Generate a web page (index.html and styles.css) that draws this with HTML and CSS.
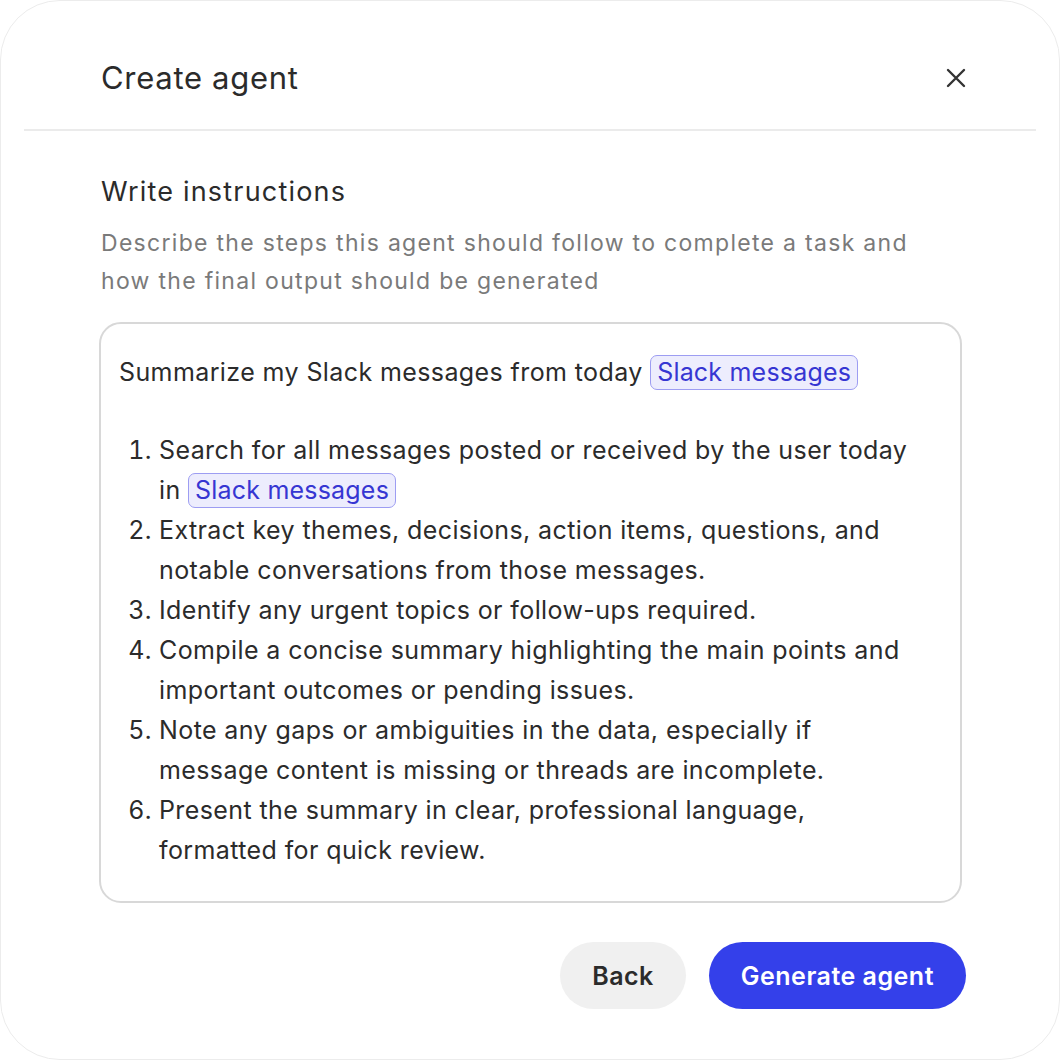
FILE: index.html
```html
<!DOCTYPE html>
<html lang="en">
<head>
  <meta charset="UTF-8" />
  <meta name="viewport" content="width=device-width, initial-scale=1.0" />
  <title>Create agent</title>
  <link rel="stylesheet" href="styles.css">
</head>
<body>
  <div class="dialog">
    <div class="dialog-header">
      <h1 class="dialog-title">Create agent</h1>
      <button class="close-btn" aria-label="Close">
        <svg width="20" height="20" viewBox="0 0 20 20" fill="none" stroke="#333" stroke-width="2.4" stroke-linecap="round">
          <path d="M2 2 L18 18 M18 2 L2 18" />
        </svg>
      </button>
    </div>
    <div class="divider"></div>

    <div class="dialog-body">
      <h2 class="section-title">Write instructions</h2>
      <p class="section-desc">Describe the steps this agent should follow to complete a task and how the final output should be generated</p>

      <div class="editor">
        <p class="editor-intro">Summarize my Slack messages from today <span class="chip">Slack messages</span></p>
        <ol class="editor-steps">
          <li>Search for all messages posted or received by the user today in <span class="chip">Slack messages</span></li>
          <li>Extract key themes, decisions, action items, questions, and notable conversations from those messages.</li>
          <li>Identify any urgent topics or follow-ups required.</li>
          <li>Compile a concise summary highlighting the main points and important outcomes or pending issues.</li>
          <li>Note any gaps or ambiguities in the data, especially if message content is missing or threads are incomplete.</li>
          <li>Present the summary in clear, professional language, formatted for quick review.</li>
        </ol>
      </div>

      <div class="actions">
        <button class="btn btn-secondary">Back</button>
        <button class="btn btn-primary">Generate agent</button>
      </div>
    </div>
  </div>
</body>
</html>
```

FILE: styles.css
```css
html, body {
  margin: 0;
  padding: 0;
  background: #fff;
  font-family: 'Inter', 'Noto Sans', sans-serif;
  color: #2b2b2b;
}
.dialog {
  box-sizing: border-box;
  width: 1060px;
  height: 1060px;
  border: 1px solid #ececec;
  border-radius: 60px;
  background: #fff;
}
.dialog-header {
  display: flex;
  align-items: center;
  justify-content: space-between;
  padding: 57px 93px 31px 100px;
}
.dialog-title {
  margin: 0;
  font-size: 31px;
  font-weight: 400;
  letter-spacing: 0.7px;
  line-height: 40px;
  color: #2b2b2b;
}
.close-btn {
  border: none;
  background: none;
  padding: 0;
  width: 20px;
  height: 20px;
  cursor: pointer;
  display: flex;
}
.divider {
  height: 2px;
  margin: 0 23px;
  background: #ebebeb;
}

.dialog-body {
  padding: 45px 97px 0 98px;
}
.section-title {
  margin: 0 0 0 2px;
  font-size: 27px;
  font-weight: 400;
  letter-spacing: 1.2px;
  line-height: 32px;
  color: #2b2b2b;
}
.section-desc {
  margin: 16px 0 22px 2px;
  font-size: 23px;
  letter-spacing: 1.3px;
  line-height: 38px;
  color: #7a7a7a;
}

.editor {
  box-sizing: border-box;
  height: 581px;
  border: 2px solid #d8d8d8;
  border-radius: 22px;
  padding: 28px 48px 0 18px;
  font-size: 25px;
  letter-spacing: 0.4px;
  line-height: 40px;
  color: #2b2b2b;
}
.editor-intro {
  margin: 0 0 38px;
}
.editor-steps {
  margin: 0;
  padding-left: 40px;
}
.chip {
  display: inline-block;
  line-height: 33px;
  padding: 0 6px;
  margin-left: 0;
  border: 1.5px solid #9d9df2;
  border-radius: 7px;
  background: #ededfd;
  color: #3636d2;
  letter-spacing: 0.2px;
}

.actions {
  display: flex;
  justify-content: flex-end;
  gap: 23px;
  margin: 39px -4px 0 0;
}
.btn {
  height: 67px;
  padding: 0 32px;
  border: none;
  border-radius: 34px;
  font-family: 'Inter', 'Noto Sans', sans-serif;
  font-size: 25px;
  font-weight: 600;
  letter-spacing: 0.5px;
  cursor: pointer;
}
.btn-secondary {
  background: #f0f0f0;
  color: #2b2b2b;
}
.btn-primary {
  background: #3440ea;
  color: #fff;
}
```
